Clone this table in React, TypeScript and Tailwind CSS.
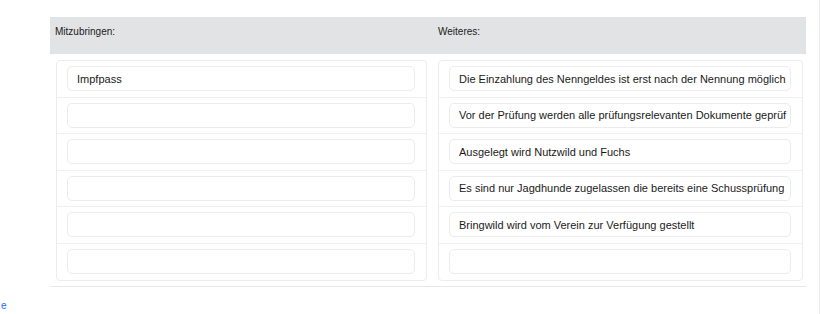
import React from "react";

const left = ["Impfpass", "", "", "", "", ""];
const right = [
  "Die Einzahlung des Nenngeldes ist erst nach der Nennung möglich",
  "Vor der Prüfung werden alle prüfungsrelevanten Dokumente geprüf",
  "Ausgelegt wird Nutzwild und Fuchs",
  "Es sind nur Jagdhunde zugelassen die bereits eine Schussprüfung",
  "Bringwild wird vom Verein zur Verfügung gestellt",
  "",
];

function Card({ items, width }: { items: string[]; width: string }) {
  return (
    <div className={`${width} border border-[#ececec] rounded-[4px] bg-white`}>
      {items.map((t, i) => (
        <div
          key={i}
          className={`h-[36.5px] flex items-center pl-[10px] pr-[11px] ${
            i < items.length - 1 ? "border-b border-[#f0f0f0]" : ""
          }`}
        >
          <div className="w-full h-[25px] border border-[#ececec] rounded-[5px] pl-[9px] flex items-center overflow-hidden whitespace-nowrap text-[11px] text-[#1a1a1a]">
            {t}
          </div>
        </div>
      ))}
    </div>
  );
}

export default function App() {
  return (
    <div
      className="w-[820px] h-[314px] bg-white border-r border-[#ececec] overflow-hidden"
      style={{ fontFamily: '"Liberation Sans", Arial, sans-serif' }}
    >
      <div className="pt-[17px] pl-[50px]">
        <div className="w-[756px] border-b border-[#e8e8e8] pb-[5px]">
          <div className="h-[37px] bg-[#e2e3e5] flex text-[10px] leading-[14px] text-[#1a1a1a] pt-[8px]">
            <div className="w-[383px] pl-[5px]">Mitzubringen:</div>
            <div className="pl-[5px]">Weiteres:</div>
          </div>
          <div className="flex pl-[6px] pt-[6px] gap-[11px]">
            <Card items={left} width="w-[371px]" />
            <Card items={right} width="w-[365px]" />
          </div>
        </div>
      </div>
      <div className="mt-[12px] pl-[1px] text-[10px] leading-[14px] text-[#1a6dff]">e</div>
    </div>
  );
}
